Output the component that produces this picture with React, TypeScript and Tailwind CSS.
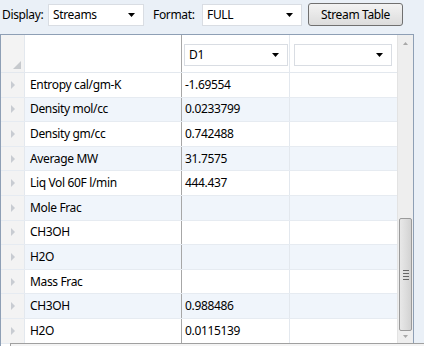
import React from "react";

const rows: [string, string][] = [
  ["Entropy cal/gm-K", "-1.69554"],
  ["Density mol/cc", "0.0233799"],
  ["Density gm/cc", "0.742488"],
  ["Average MW", "31.7575"],
  ["Liq Vol 60F l/min", "444.437"],
  ["Mole Frac", ""],
  ["CH3OH", ""],
  ["H2O", ""],
  ["Mass Frac", ""],
  ["CH3OH", "0.988486"],
  ["H2O", "0.0115139"],
];

function Caret() {
  return (
    <svg width="7" height="4" viewBox="0 0 7 4">
      <path d="M0 0 L7 0 L3.5 4 Z" fill="#000" />
    </svg>
  );
}

function Combo({ text, w, h = "h-[22px]" }: { text: string; w: string; h?: string }) {
  return (
    <div className={`${w} ${h} bg-white border border-[#d9dde3] flex items-center justify-between pl-[4px] pr-[8px] shrink-0`}>
      <span>{text}</span>
      <Caret />
    </div>
  );
}

function RowArrow() {
  return (
    <svg width="4" height="8" viewBox="0 0 4 8">
      <path d="M0 0 L4 4 L0 8 Z" fill="#c8ccd2" />
    </svg>
  );
}

export default function App() {
  return (
    <div
      className="w-[424px] h-[346px] bg-[#eaf0f7] text-[12px] tracking-[-0.35px] text-black overflow-hidden relative"
      style={{ fontFamily: '"Noto Sans", "Open Sans", sans-serif' }}
    >
      <div className="h-[34px] flex items-start pt-[4px] pl-[2px]">
        <span className="h-[22px] flex items-center w-[46px]">Display:</span>
        <Combo text="Streams" w="w-[96px]" />
        <span className="h-[22px] flex items-center ml-[9px] w-[49px]">Format:</span>
        <Combo text="FULL" w="w-[100px]" />
        <div className="ml-[6px] -mt-[1px] w-[95px] h-[23px] rounded-[3px] border border-[#707070] bg-gradient-to-b from-[#f3f3f3] to-[#dcdcdc] flex items-center justify-center">
          Stream Table
        </div>
      </div>
      <div className="w-[414px] h-[320px] border border-[#8e9fb5] bg-white flex">
        <div className="flex-1 flex flex-col">
          <div className="h-[38px] shrink-0 flex border-b border-[#e3e8ee]">
            <div className="w-[24px] bg-[#f3f3f3] border-r border-[#e3e8ee] flex items-end justify-end p-[3px]">
              <svg width="8" height="8" viewBox="0 0 8 8">
                <path d="M8 0 L8 8 L0 8 Z" fill="#c6c9cd" />
              </svg>
            </div>
            <div className="w-[157px] border-r border-[#a7a7a7]"></div>
            <div className="w-[108px] border-r border-[#e3e8ee] flex items-end pb-[6px] px-[2px]">
              <Combo text="D1" w="w-[104px]" h="h-[22px]" />
            </div>
            <div className="flex-1 flex items-end pb-[6px] px-[4px]">
              <Combo text="" w="w-[98px]" h="h-[22px]" />
            </div>
          </div>
          {rows.map(([a, b], i) => (
            <div
              key={i}
              className={`h-[24.6px] shrink-0 flex border-b border-[#e6ebf1] ${i % 2 === 1 ? "bg-[#f0f5fb]" : "bg-white"}`}
            >
              <div className="w-[24px] bg-[#f3f3f3] border-r border-[#e3e8ee] flex items-center pl-[10px]">
                <RowArrow />
              </div>
              <div className="w-[157px] border-r border-[#a7a7a7] flex items-center pl-[5px]">{a}</div>
              <div className="w-[108px] border-r border-[#e3e8ee] flex items-center pl-[3px]">{b}</div>
              <div className="flex-1"></div>
            </div>
          ))}
        </div>
        <div className="w-[16px] bg-[#eeeeee] border-l border-[#e3e3e3] flex flex-col items-center">
          <svg className="mt-[7px]" width="5" height="3" viewBox="0 0 5 3">
            <path d="M0 3 L2.5 0 L5 3 Z" fill="#a8a8a8" />
          </svg>
          <div className="mt-[173px] w-[13px] h-[113px] rounded-[2px] border border-[#9a9a9a] bg-gradient-to-r from-[#e8e8e8] via-[#dedede] to-[#d2d2d2] flex flex-col items-center justify-center gap-[2px]">
            <div className="w-[6px] h-px bg-[#666]" />
            <div className="w-[6px] h-px bg-[#666]" />
            <div className="w-[6px] h-px bg-[#666]" />
            <div className="w-[6px] h-px bg-[#666]" />
          </div>
          <svg className="mt-[4px]" width="5" height="3" viewBox="0 0 5 3">
            <path d="M0 0 L2.5 3 L5 0 Z" fill="#a8a8a8" />
          </svg>
        </div>
      </div>
      <div className="absolute left-[10px] top-[343px] w-[420px] h-[10px] bg-[#f4f4f4] border-t border-l border-[#a0a0a0]"></div>
    </div>
  );
}
